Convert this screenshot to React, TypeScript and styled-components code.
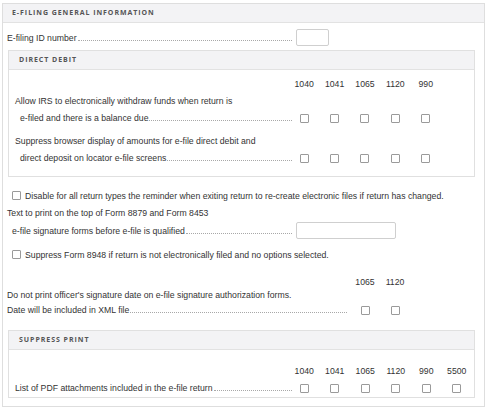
import React from "react"
import styled, { createGlobalStyle } from "styled-components"

const GlobalStyle = createGlobalStyle`
body {
  margin: 0;
  background: #fff;
  font-family: "Liberation Sans", Arial, sans-serif;
  font-size: 8.7px;
  color: #333;
}
`

const Page = styled.div`
padding: 3px 0 0 2px;
`

const Panel = styled.div`
width: 483px;
box-sizing: border-box;
border: 1px solid #dedede;
`

const Section = styled.div<{ $mt: number }>`
margin: ${p => p.$mt}px 0 0 1px;
border: 1px solid #e0e0e0;
`

const Head = styled.div<{ $pad: number }>`
height: 18px;
line-height: 18px;
padding-left: ${p => p.$pad}px;
background: #f3f3f5;
border-bottom: 1px solid #e2e2e2;
font-family: "Open Sans", "DejaVu Sans", sans-serif;
font-weight: 700;
font-size: 7px;
letter-spacing: 0.95px;
color: #555;
`

const Body = styled.div<{ $pad: string }>`
padding: ${p => p.$pad};
`

const Line = styled.div<{ $h: number; $mt?: number; $indent?: number }>`
display: flex;
align-items: center;
height: ${p => p.$h}px;
margin-top: ${p => p.$mt || 0}px;
padding-left: ${p => p.$indent || 0}px;
white-space: nowrap;
`

const Grid = styled.div<{ $label: number; $cols: number; $pitch: number; $h: number; $mt?: number }>`
display: grid;
grid-template-columns: ${p => p.$label}px repeat(${p => p.$cols}, ${p => p.$pitch}px);
align-items: center;
justify-items: center;
height: ${p => p.$h}px;
margin-top: ${p => p.$mt || 0}px;
`

const FieldRow = styled.div<{ $label: number; $h: number; $mt?: number }>`
display: grid;
grid-template-columns: ${p => p.$label}px auto;
column-gap: 4px;
align-items: center;
height: ${p => p.$h}px;
margin-top: ${p => p.$mt || 0}px;
`

const Label = styled.div<{ $indent?: number }>`
justify-self: stretch;
display: flex;
align-items: flex-end;
padding-left: ${p => p.$indent || 0}px;
line-height: 10px;
white-space: nowrap;
`

const Leader = styled.span<{ $trim: number }>`
flex: 1;
height: 0;
margin: 0 ${p => p.$trim}px 2px 1px;
border-bottom: 1px dotted #a8a8a8;
`

const Box = styled.span`
display: inline-block;
width: 9px;
height: 9px;
box-sizing: border-box;
border: 1px solid #9a9a9a;
border-radius: 1px;
background: #fff;
`

const Field = styled.div<{ $w: number }>`
width: ${p => p.$w}px;
height: 17px;
box-sizing: border-box;
border: 1px solid #cfcfcf;
border-radius: 2px;
background: #fff;
`

const CheckLine = styled.label`
display: flex;
align-items: center;
gap: 4px;
padding-left: 5px;
`

const ddForms = ["1040", "1041", "1065", "1120", "990"]
const printForms = ["1040", "1041", "1065", "1120", "990", "5500"]
const officerForms = ["1065", "1120"]

function Leadered({ text, indent, trim }: { text: string; indent?: number; trim: number }) {
  return (
    <Label $indent={indent}>
      <span>{text}</span>
      <Leader $trim={trim} />
    </Label>
  )
}

export default function App() {
  return (
    <Page>
      <GlobalStyle />
      <Panel>
        <Head $pad={9}>E-FILING GENERAL INFORMATION</Head>
        <Body $pad="6px 9px 8px 4px">
          <FieldRow $label={285} $h={17}>
            <Leadered text="E-filing ID number" trim={0} />
            <Field $w={33} />
          </FieldRow>

          <Section $mt={4}>
            <Head $pad={10}>DIRECT DEBIT</Head>
            <Body $pad="6px 6px 9px 6px">
              <Grid $label={274} $cols={5} $pitch={30.4} $h={16}>
                <span />
                {ddForms.map(f => <span key={f}>{f}</span>)}
              </Grid>
              <Line $h={16} $mt={1}>Allow IRS to electronically withdraw funds when return is</Line>
              <Grid $label={274} $cols={5} $pitch={30.4} $h={18}>
                <Leadered text="e-filed and there is a balance due" indent={5} trim={-3} />
                {ddForms.map(f => <Box key={f} />)}
              </Grid>
              <Line $h={16} $mt={6}>Suppress browser display of amounts for e-file direct debit and</Line>
              <Grid $label={274} $cols={5} $pitch={30.4} $h={18}>
                <Leadered text="direct deposit on locator e-file screens" indent={5} trim={-3} />
                {ddForms.map(f => <Box key={f} />)}
              </Grid>
            </Body>
          </Section>

          <Line $h={17} $mt={10}>
            <CheckLine>
              <Box />
              Disable for all return types the reminder when exiting return to re-create electronic files if return has changed.
            </CheckLine>
          </Line>
          <Line $h={17}>Text to print on the top of Form 8879 and Form 8453</Line>
          <FieldRow $label={285} $h={17} $mt={1}>
            <Leadered text="e-file signature forms before e-file is qualified" indent={5} trim={0} />
            <Field $w={100} />
          </FieldRow>
          <Line $h={17} $mt={7}>
            <CheckLine>
              <Box />
              Suppress Form 8948 if return is not electronically filed and no options selected.
            </CheckLine>
          </Line>

          <Grid $label={343} $cols={2} $pitch={30} $h={13} $mt={12}>
            <span />
            {officerForms.map(f => <span key={f}>{f}</span>)}
          </Grid>
          <Line $h={13}>Do not print officer's signature date on e-file signature authorization forms.</Line>
          <Grid $label={343} $cols={2} $pitch={30} $h={18}>
            <Leadered text="Date will be included in XML file" trim={3} />
            {officerForms.map(f => <Box key={f} />)}
          </Grid>

          <Section $mt={11}>
            <Head $pad={10}>SUPPRESS PRINT</Head>
            <Body $pad="13px 6px 0 6px">
              <Grid $label={274} $cols={6} $pitch={30.5} $h={16}>
                <span />
                {printForms.map(f => <span key={f}>{f}</span>)}
              </Grid>
              <Grid $label={274} $cols={6} $pitch={30.5} $h={18}>
                <Leadered text="List of PDF attachments included in the e-file return" trim={-3} />
                {printForms.map(f => <Box key={f} />)}
              </Grid>
            </Body>
          </Section>
        </Body>
      </Panel>
    </Page>
  )
}
